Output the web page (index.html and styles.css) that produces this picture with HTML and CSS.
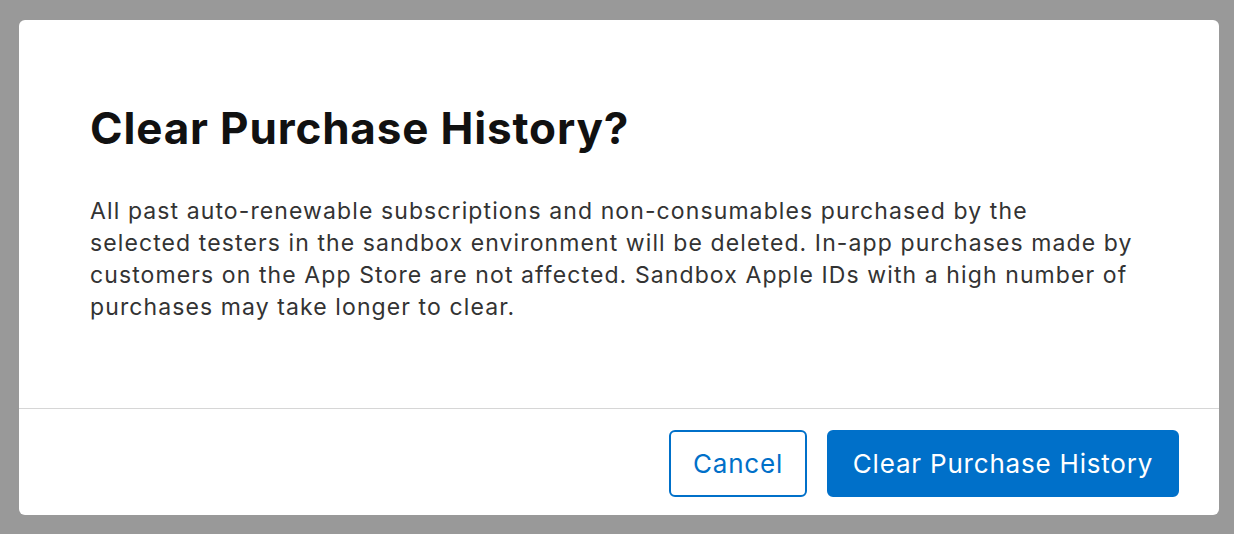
FILE: index.html
```html
<!DOCTYPE html>
<html>
<head>
<meta charset="utf-8">
<link rel="stylesheet" href="styles.css">
</head>
<body>
<div class="dialog">
  <div class="content">
    <h1 class="title">Clear Purchase History?</h1>
    <p class="text">All past auto-renewable subscriptions and non-consumables purchased by the<br>selected testers in the sandbox environment will be deleted. In-app purchases made by<br>customers on the App Store are not affected. Sandbox Apple IDs with a high number of<br>purchases may take longer to clear.</p>
  </div>
  <div class="footer">
    <button class="btn btn-secondary">Cancel</button>
    <button class="btn btn-primary">Clear Purchase History</button>
  </div>
</div>
</body>
</html>
```

FILE: styles.css
```css
html, body {
  margin: 0;
  padding: 0;
  width: 1234px;
  height: 534px;
  background: #999999;
  overflow: hidden;
}
body {
  padding: 20px 15px 0 19px;
  box-sizing: border-box;
  font-family: Inter, "Noto Sans", sans-serif;
}
.dialog {
  width: 1200px;
  height: 495px;
  background: #ffffff;
  border-radius: 6px;
  display: flex;
  flex-direction: column;
}
.content {
  flex: 1;
  padding: 80px 70px 0 71px;
}
.title {
  margin: 0;
  font-size: 44px;
  font-weight: 700;
  line-height: 56px;
  color: #111111;
  letter-spacing: 0.85px;
}
.text {
  margin: 39px 0 0 0;
  font-size: 23px;
  line-height: 32px;
  color: #333333;
  white-space: nowrap;
  letter-spacing: 1.1px;
}
.footer {
  border-top: 1px solid #d6d6d6;
  height: 107px;
  box-sizing: border-box;
  display: flex;
  justify-content: flex-end;
  align-items: flex-start;
  gap: 20px;
  padding: 21px 40px 0 0;
}
.btn {
  font-family: Inter, "Noto Sans", sans-serif;
  font-size: 26px;
  letter-spacing: 0.8px;
  height: 67px;
  border-radius: 6px;
  padding: 0;
  cursor: pointer;
  box-sizing: border-box;
}
.btn-secondary {
  background: #ffffff;
  color: #0070c9;
  border: 2px solid #0070c9;
  width: 138px;
}
.btn-primary {
  background: #0070c9;
  color: #ffffff;
  border: 2px solid #0070c9;
  width: 352px;
}
```
